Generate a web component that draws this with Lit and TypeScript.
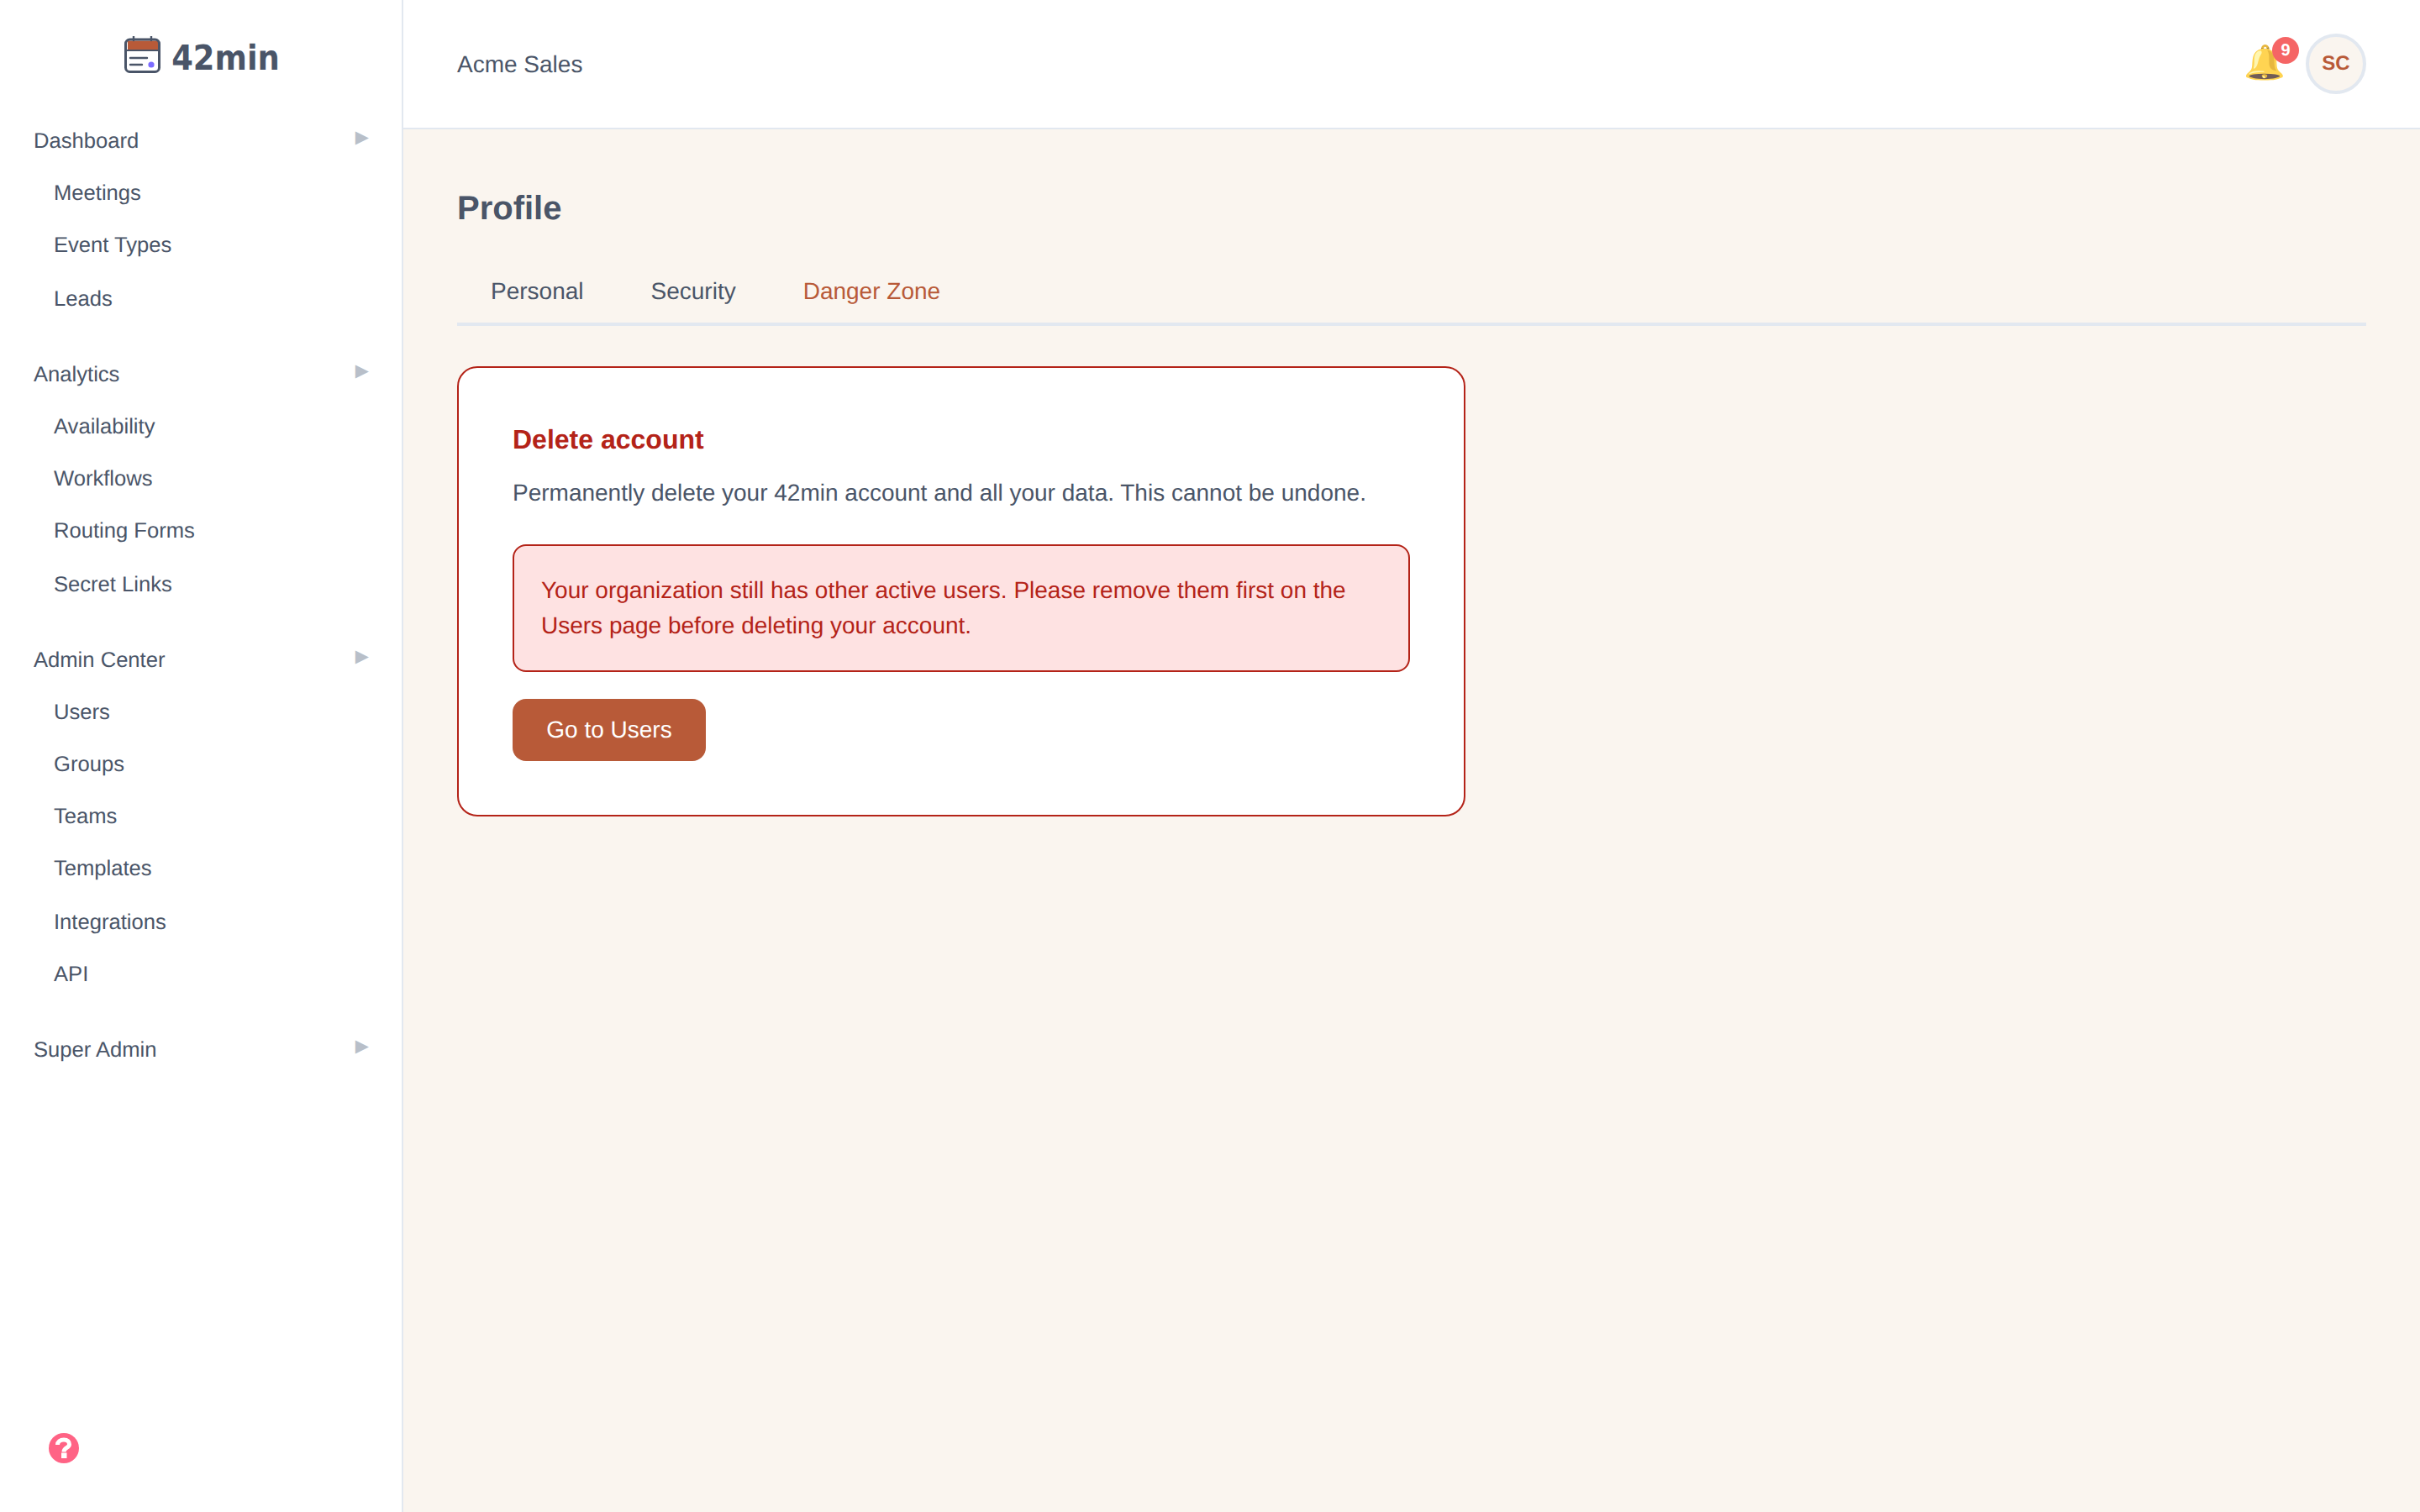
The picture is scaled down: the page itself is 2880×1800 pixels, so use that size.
import { LitElement, html, css } from "lit";
import { customElement } from "lit/decorators.js";

const NAV = [
  { title: "Dashboard", items: ["Meetings", "Event Types", "Leads"] },
  { title: "Analytics", items: ["Availability", "Workflows", "Routing Forms", "Secret Links"] },
  { title: "Admin Center", items: ["Users", "Groups", "Teams", "Templates", "Integrations", "API"] },
  { title: "Super Admin", items: [] as string[] },
];

const ROW = 62.4;
const SECTION_MARGIN = 28;
const SECTION_GAPS = [28, 27.6, 28.4, 28];
const NAV_TOP = 136;
const snap = (y: number) => Math.round(y / 2) * 2;

/* Row heights land on even pixels, so the rhythm alternates between 62 and 64. */
function layoutRows() {
  let y = NAV_TOP;
  return NAV.map((s, si) => {
    const labels = [s.title, ...s.items];
    const rows = labels.map((label, i) => {
      const last = i === labels.length - 1;
      const next = y + ROW + (last ? SECTION_GAPS[si] : 0);
      const h = snap(next) - snap(y) - (last ? SECTION_MARGIN : 0);
      y = next;
      return { label, h, head: i === 0 };
    });
    return { rows, si };
  });
}

@customElement("app-root")
export class AppRoot extends LitElement {
  static styles = css`
    :host {
      display: block;
      font-family: "Liberation Sans", Arial, sans-serif;
      color: #4a5568;
      text-rendering: geometricPrecision;
    }
    * { box-sizing: border-box; }
    .app { display: flex; min-height: 1800px; background: #faf5ef; }
    .sidebar {
      width: 480px;
      flex: none;
      background: #fff;
      border-right: 2px solid #e2e8f0;
      display: flex;
      flex-direction: column;
    }
    .logo {
      height: 136px;
      display: flex;
      align-items: center;
      justify-content: center;
      gap: 12px;
      padding-left: 3px;
      font-family: "DejaVu Sans", sans-serif;
      font-stretch: condensed;
      font-weight: 700;
      font-size: 41px;
    }
    .logo svg { display: block; margin-top: -6px; }
    .logo span { margin-top: 1px; }
    .nav { flex: 1; }
    .section { margin-bottom: 28px; }
    .row {
      font-size: 25.6px;
      line-height: 38.4px;
      padding: 13px 40px 0;
      display: flex;
      justify-content: space-between;
    }
    .row.sub { padding-left: 64px; }
    .chev {
      font-family: "DejaVu Sans", sans-serif;
      font-size: 21px;
      line-height: 28px;
      color: #b8bfc9;
      margin-right: -1px;
    }
    .help { padding: 0 0 58px 58px; }
    .help svg { display: block; }
    .main { flex: 1; min-width: 0; display: flex; flex-direction: column; }
    .top {
      height: 154px;
      background: #fff;
      border-bottom: 2px solid #e2e8f0;
      display: flex;
      align-items: center;
      justify-content: space-between;
      padding: 0 64px;
      font-size: 28px;
    }
    .org { padding-top: 2px; }
    .actions { display: flex; align-items: center; gap: 8px; }
    .bell { position: relative; width: 64px; height: 72px; display: flex; align-items: center; }
    .emoji { font-size: 40px; line-height: 72px; margin: -3px 0 0 -2px; font-family: "Noto Color Emoji", sans-serif; opacity: 0.8; }
    .badge {
      position: absolute;
      top: 4px;
      right: 0;
      width: 32px;
      height: 32px;
      border-radius: 50%;
      background: #f56565;
      color: #fff;
      font-size: 20px;
      font-weight: 700;
      display: flex;
      align-items: center;
      justify-content: center;
    }
    .avatar {
      width: 72px;
      height: 72px;
      border-radius: 50%;
      border: 4px solid #e2e8f0;
      background: #faf5ef;
      color: #b85a38;
      font-size: 24px;
      font-weight: 700;
      display: flex;
      align-items: center;
      justify-content: center;
    }
    .content { padding: 64px; }
    h1 { margin: 0 0 31px; font-size: 40px; line-height: 60px; font-weight: 700; }
    .tabs { display: flex; border-bottom: 4px solid #e2e8f0; margin-bottom: 48px; }
    .tab { padding: 17px 40px 16px; font-size: 28px; line-height: 42px; }
    .tab.on { color: #b85a38; }
    .card {
      width: 1200px;
      background: #fff;
      border: 2px solid #b42318;
      border-radius: 24px;
      padding: 64px;
    }
    h2 { margin: 0 0 22px; font-size: 32px; line-height: 42px; font-weight: 700; color: #b42318; }
    .desc { margin: 0 0 40px; font-size: 28px; line-height: 42px; }
    .alert {
      background: #fee2e2;
      border: 2px solid #b42318;
      border-radius: 16px;
      padding: 32px;
      color: #b42318;
      font-size: 28px;
      line-height: 42px;
      margin-bottom: 32px;
    }
    .btn {
      display: inline-block;
      background: #b85a38;
      color: #fff;
      font-size: 28px;
      line-height: 32px;
      padding: 21px 40.3px;
      border-radius: 16px;
      vertical-align: top;
    }
  `;

  render() {
    return html`
      <div class="app">
        <aside class="sidebar">
          <div class="logo">
            <svg width="44" height="44" viewBox="0 0 44 44" fill="none">
              <path d="M4 5.5h36v11H4z" fill="#b85a38" />
              <rect x="1.5" y="4" width="40" height="38.5" rx="5" stroke="#4a5568" stroke-width="3" />
              <path d="M3 17h37" stroke="#4a5568" stroke-width="2" />
              <path d="M11 0v5M32 0v5M7 26h20M7 34h14" stroke="#4a5568" stroke-width="2.4" stroke-linecap="round" />
              <circle cx="32" cy="34" r="3.6" fill="#7c6cff" />
            </svg>
            <span>42min</span>
          </div>
          <nav class="nav">
            ${layoutRows().map(
              (s) => html`
                <div class="section">
                  ${s.rows.map(
                    (r) =>
                      r.head
                        ? html`<div class="row" style="height:${r.h}px"><span>${r.label}</span><span class="chev">▶</span></div>`
                        : html`<div class="row sub" style="height:${r.h}px">${r.label}</div>`
                  )}
                </div>
              `
            )}
          </nav>
          <div class="help">
            <svg width="36" height="36" viewBox="0 0 36 36">
              <circle cx="18" cy="18" r="18" fill="#ff6385" />
              <path d="M10.5 14c0-3.5 3-6 7.5-6s6.5 2.5 6.5 5.5c0 4.5-6.5 3.5-6.5 9" fill="none" stroke="#fff" stroke-width="5" />
              <rect x="15" y="23.5" width="6.5" height="6.5" fill="#fff" />
            </svg>
          </div>
        </aside>
        <div class="main">
          <header class="top">
            <span class="org">Acme Sales</span>
            <div class="actions">
              <div class="bell"><span class="emoji">🔔</span><span class="badge">9</span></div>
              <div class="avatar">SC</div>
            </div>
          </header>
          <section class="content">
            <h1>Profile</h1>
            <div class="tabs">
              <div class="tab">Personal</div>
              <div class="tab">Security</div>
              <div class="tab on">Danger Zone</div>
            </div>
            <div class="card">
              <h2>Delete account</h2>
              <p class="desc">Permanently delete your 42min account and all your data. This cannot be undone.</p>
              <div class="alert">Your organization still has other active users. Please remove them first on the Users page before deleting your account.</div>
              <span class="btn">Go to Users</span>
            </div>
          </section>
        </div>
      </div>
    `;
  }
}
